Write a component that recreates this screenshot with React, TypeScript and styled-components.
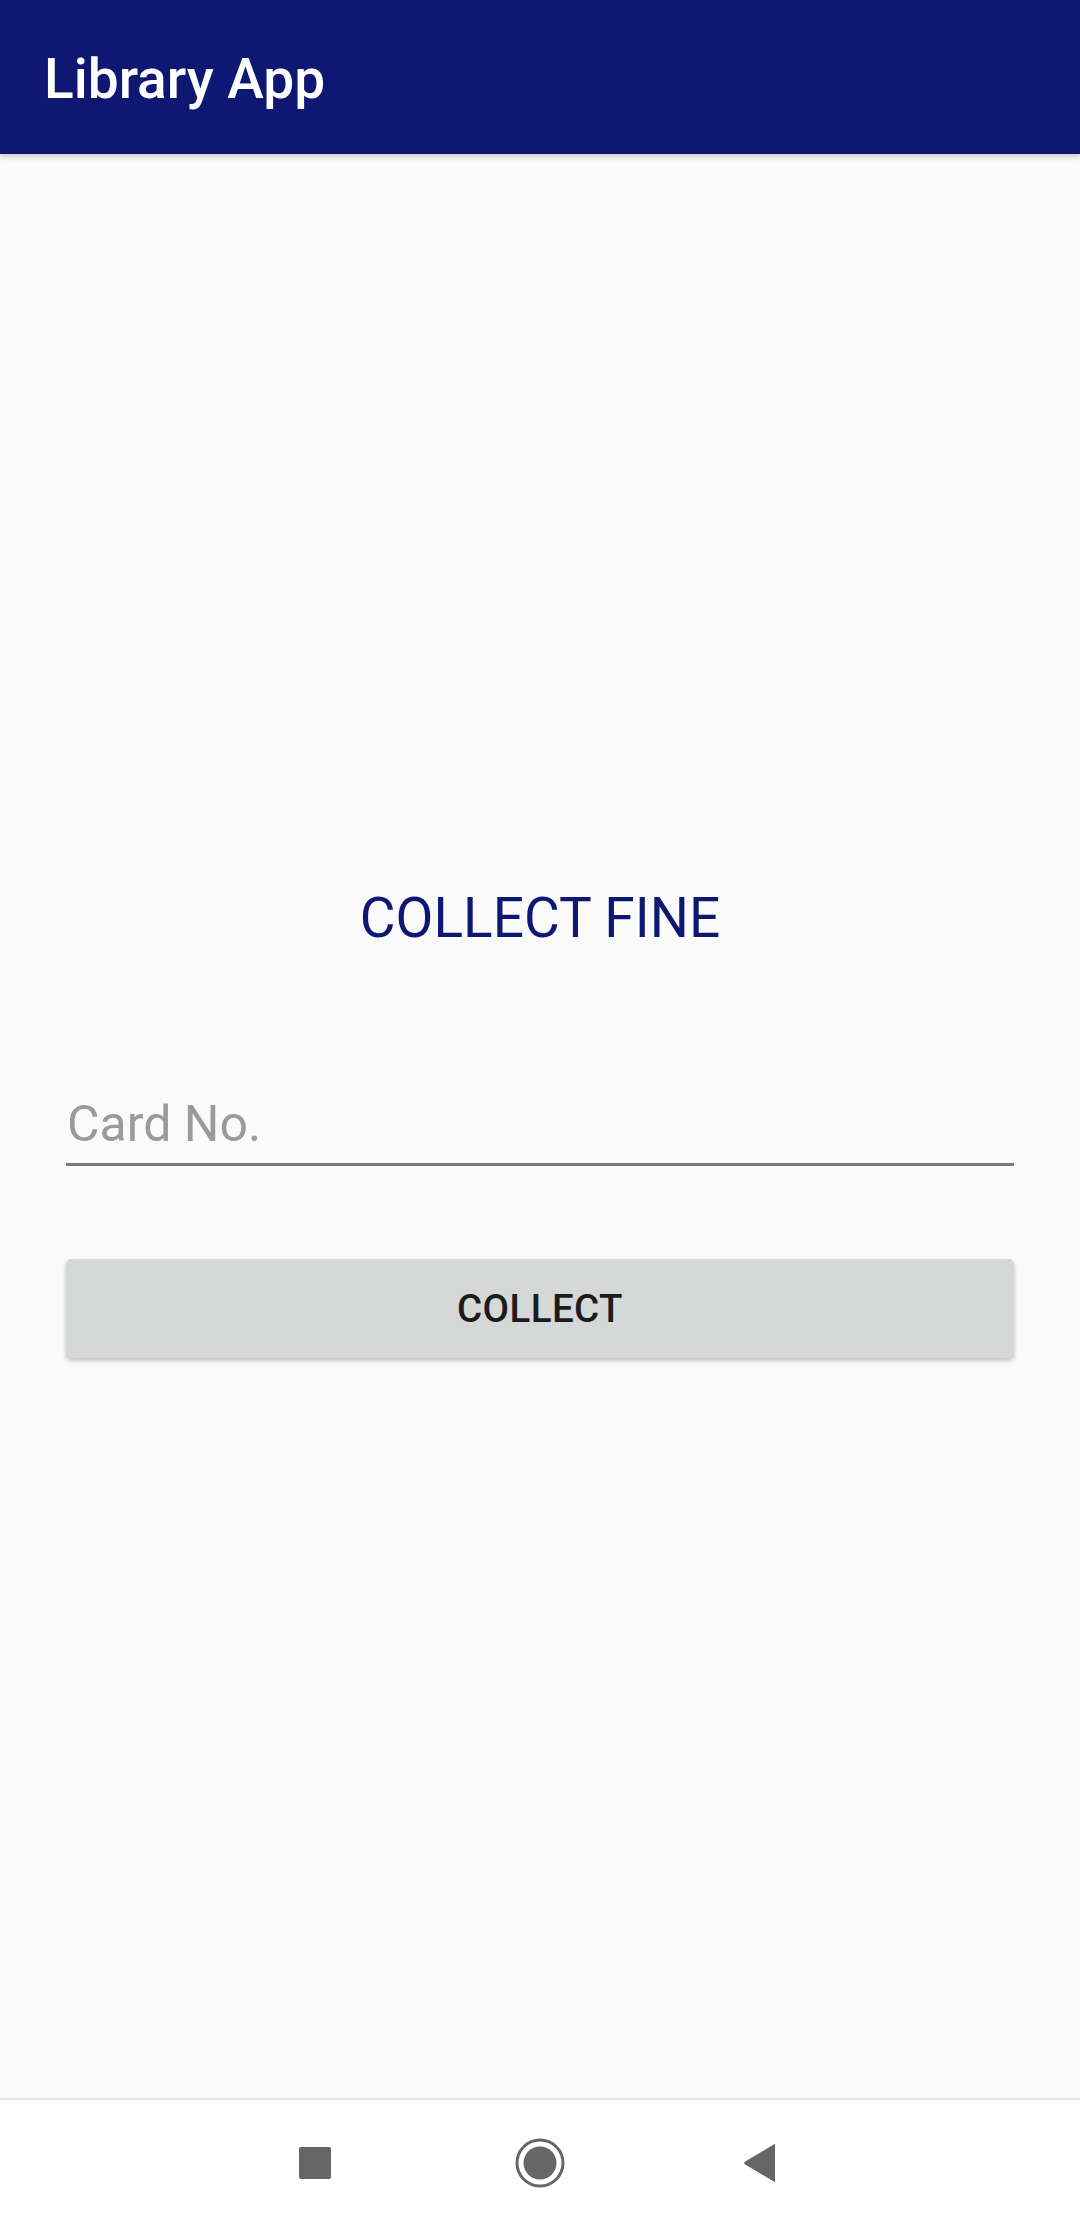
import React from "react";
import styled, { createGlobalStyle } from "styled-components";

const Global = createGlobalStyle`
  html, body { margin: 0; padding: 0; background: #fafafa; }
  #root { min-height: 100vh; }
  * { box-sizing: border-box; }
`;

const Screen = styled.div`
  display: flex;
  flex-direction: column;
  height: 2226px;
  width: 1080px;
  background: #fafafa;
  font-family: Roboto, "Noto Sans", sans-serif;
`;

const AppBar = styled.header`
  height: 154px;
  flex: 0 0 154px;
  background: #0e1771;
  display: flex;
  align-items: center;
  padding-left: 44px;
  box-shadow: 0 2px 6px rgba(0, 0, 0, 0.22);
  position: relative;
  z-index: 1;
`;

const AppTitle = styled.h1`
  margin: 0;
  color: #ffffff;
  font-size: 55px;
  font-weight: 500;
  line-height: 66px;
  padding-top: 3px;
`;

const Main = styled.main`
  flex: 1;
  display: flex;
  flex-direction: column;
  justify-content: center;
  align-items: stretch;
  padding: 0 66px 9px;
`;

const Heading = styled.h2`
  margin: 0;
  text-align: center;
  color: #0e1771;
  font-size: 55px;
  font-weight: 400;
  line-height: 66px;
`;

const Field = styled.input`
  margin-top: 143px;
  width: 100%;
  border: none;
  border-bottom: 3px solid #7a7a7a;
  background: transparent;
  font-family: Roboto, "Noto Sans", sans-serif;
  font-size: 50px;
  line-height: 60px;
  height: 72px;
  padding: 0 0 9px 1px;
  color: #222;
  outline: none;
  &::placeholder {
    color: #9a9a9a;
  }
`;

const Button = styled.button`
  margin-top: 93px;
  height: 99px;
  width: 100%;
  border: none;
  border-radius: 5px;
  background: #d6d7d7;
  color: #1c1c1c;
  font-family: Roboto, "Noto Sans", sans-serif;
  font-size: 38.5px;
  font-weight: 500;
  letter-spacing: 0.4px;
  box-shadow: 0 3px 4px rgba(0, 0, 0, 0.22);
  display: flex;
  align-items: center;
  justify-content: center;
`;

const NavBar = styled.nav`
  flex: 0 0 128px;
  height: 128px;
  background: #ffffff;
  border-top: 2px solid #e4e4e4;
  display: flex;
  align-items: center;
  justify-content: center;
`;

const NavSlot = styled.div`
  width: 225px;
  display: flex;
  justify-content: center;
  align-items: center;
`;

export default function App() {
  return (
    <>
      <Global />
      <Screen>
        <AppBar>
          <AppTitle>Library App</AppTitle>
        </AppBar>
        <Main>
          <Heading>COLLECT FINE</Heading>
          <Field placeholder="Card No." />
          <Button>COLLECT</Button>
        </Main>
        <NavBar>
          <NavSlot>
            <svg width="48" height="48" viewBox="0 0 48 48">
              <rect x="8" y="8" width="32" height="32" rx="2" fill="#666" />
            </svg>
          </NavSlot>
          <NavSlot>
            <svg width="52" height="52" viewBox="0 0 52 52">
              <circle cx="26" cy="26" r="23" fill="none" stroke="#666" strokeWidth="3" />
              <circle cx="26" cy="26" r="16.5" fill="#666" />
            </svg>
          </NavSlot>
          <NavSlot>
            <svg width="48" height="48" viewBox="0 0 48 48" style={{ marginLeft: -10 }}>
              <path
                d="M39 5.5 L39 42.5 Q39 44 37.8 42.6 L8.8 25.2 Q7.5 24 8.8 22.8 L37.8 5.4 Q39 4 39 5.5 Z"
                fill="#666"
              />
            </svg>
          </NavSlot>
        </NavBar>
      </Screen>
    </>
  );
}
